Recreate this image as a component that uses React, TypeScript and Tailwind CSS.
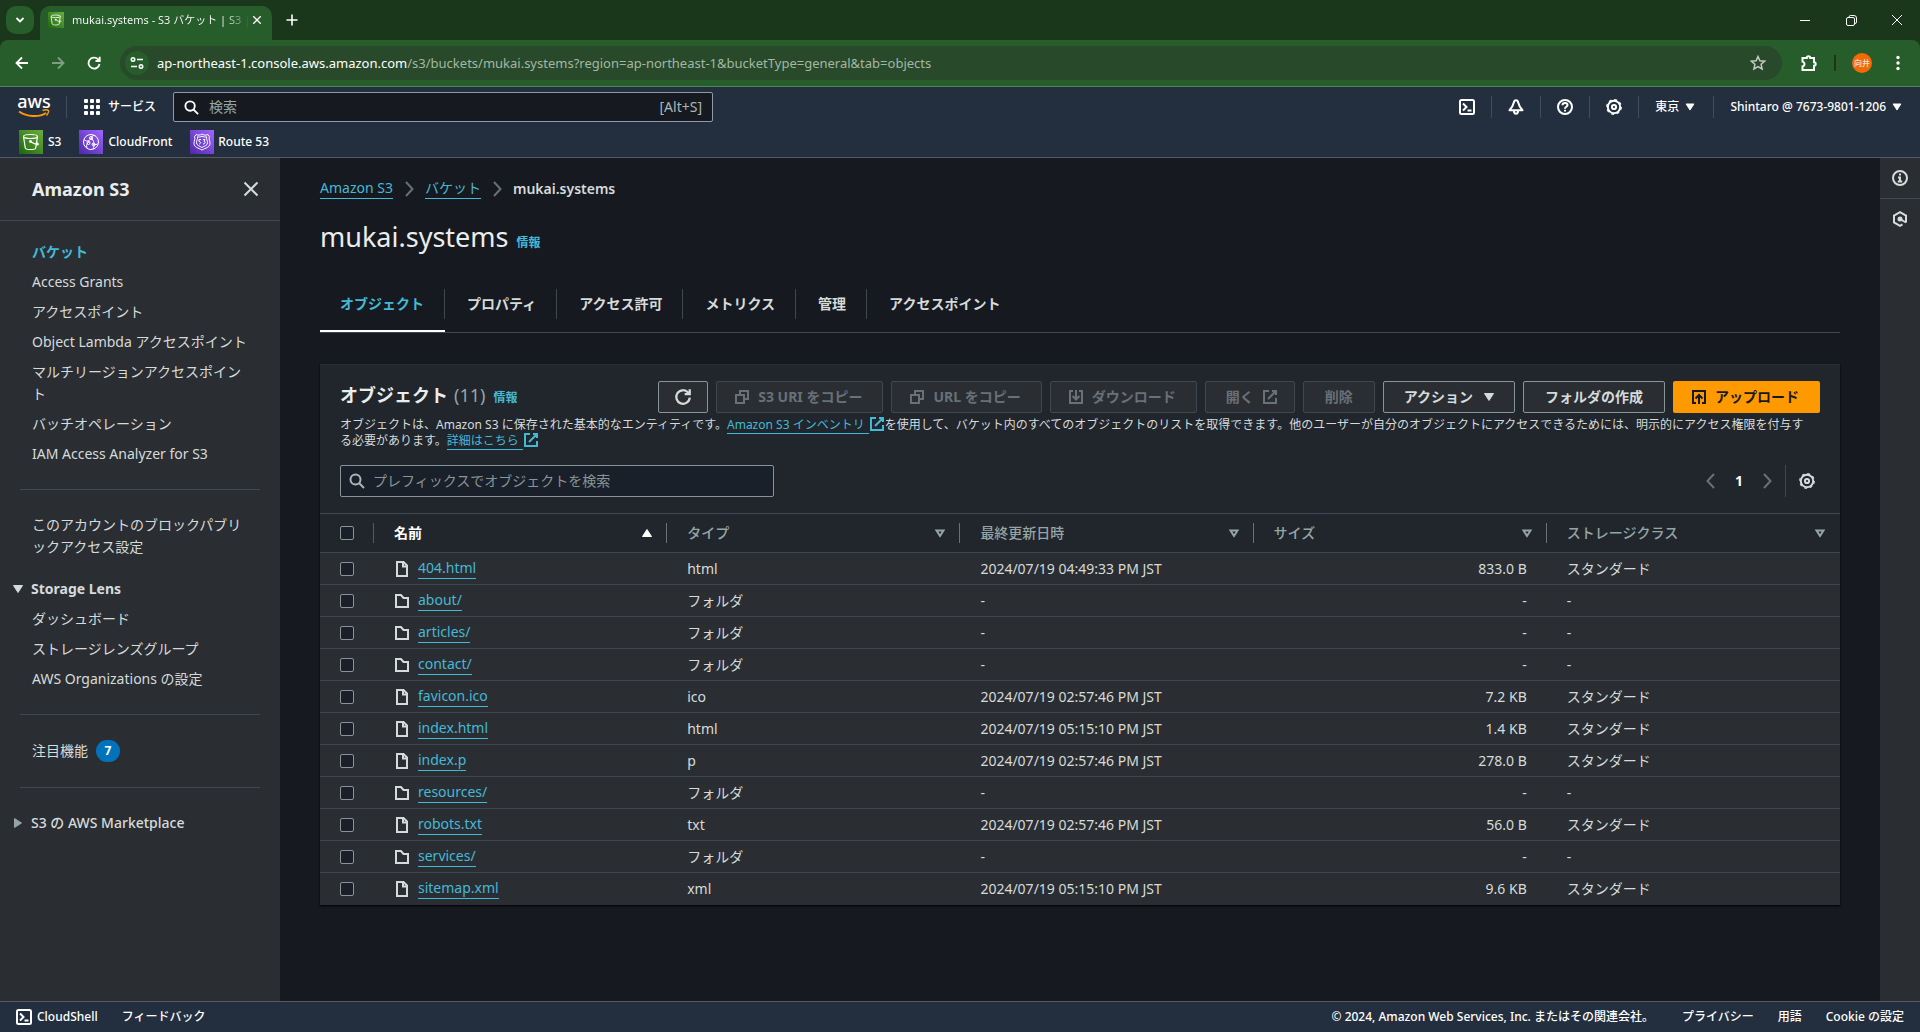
import type { ReactNode } from 'react';

type IconName =
  | 'terminal' | 'bell' | 'help' | 'gear' | 'info' | 'hexagon' | 'search' | 'close' | 'copy' | 'download'
  | 'upload' | 'external' | 'refresh' | 'file' | 'folder' | 'left' | 'right' | 'down' | 'up' | 'sort';

interface S3Object {
  name: string;
  type: string;
  modified: string;
  size: string;
  storage: string;
}

const STANDARD = 'スタンダード';

const objects: S3Object[] = [
  { name: '404.html', type: 'html', modified: '2024/07/19 04:49:33 PM JST', size: '833.0 B', storage: STANDARD },
  { name: 'about/', type: 'フォルダ', modified: '-', size: '-', storage: '-' },
  { name: 'articles/', type: 'フォルダ', modified: '-', size: '-', storage: '-' },
  { name: 'contact/', type: 'フォルダ', modified: '-', size: '-', storage: '-' },
  { name: 'favicon.ico', type: 'ico', modified: '2024/07/19 02:57:46 PM JST', size: '7.2 KB', storage: STANDARD },
  { name: 'index.html', type: 'html', modified: '2024/07/19 05:15:10 PM JST', size: '1.4 KB', storage: STANDARD },
  { name: 'index.p', type: 'p', modified: '2024/07/19 02:57:46 PM JST', size: '278.0 B', storage: STANDARD },
  { name: 'resources/', type: 'フォルダ', modified: '-', size: '-', storage: '-' },
  { name: 'robots.txt', type: 'txt', modified: '2024/07/19 02:57:46 PM JST', size: '56.0 B', storage: STANDARD },
  { name: 'services/', type: 'フォルダ', modified: '-', size: '-', storage: '-' },
  { name: 'sitemap.xml', type: 'xml', modified: '2024/07/19 05:15:10 PM JST', size: '9.6 KB', storage: STANDARD },
];

const tabs = ['オブジェクト', 'プロパティ', 'アクセス許可', 'メトリクス', '管理', 'アクセスポイント'];

const columns = ['タイプ', '最終更新日時', 'サイズ', 'ストレージクラス'];

const icons: Record<IconName, ReactNode> = {
  terminal: (
    <>
      <rect x="1" y="1" width="14" height="14" rx="1.5" />
      <path d="M4 4.5 7.5 8 4 11.5M8.5 11.5h4" />
    </>
  ),
  bell: (
    <>
      <path d="M8 1.2c-1.3 0-1.9.9-2.2 2.3C5.2 6.5 4 8.5 1.5 11.2h13C12 8.5 10.8 6.5 10.2 3.5 9.9 2.1 9.3 1.2 8 1.2z" strokeLinejoin="round" />
      <path d="M6 12c0 1.8.8 2.8 2 2.8s2-1 2-2.8" />
    </>
  ),
  help: (
    <>
      <circle cx="8" cy="8" r="7" />
      <path d="M5.5 6.3C5.5 4.9 6.6 4 8 4s2.5.9 2.5 2.2C10.5 7.8 8 7.7 8 9.7M8 10.8v1.7" />
    </>
  ),
  gear: (
    <>
      <circle cx="8" cy="8" r="6.2" />
      <circle cx="8" cy="8" r="7.3" strokeWidth="1.2" strokeDasharray="2.87 2.87" />
      <circle cx="8" cy="8" r="2.1" />
    </>
  ),
  info: (
    <>
      <circle cx="8" cy="8" r="7" />
      <path d="M8 3.5v2M6 7.5h2V12M5.8 11.5h4.4" />
    </>
  ),
  hexagon: (
    <>
      <path d="M14 11.5V4.6L8 1.2 2 4.6v6.8l6 3.4 2.5-1.4" />
      <circle cx="8" cy="8" r="1.5" fill="currentColor" />
      <path d="m8 8 6 3.5" />
    </>
  ),
  search: (
    <>
      <circle cx="6.5" cy="6.5" r="5" />
      <path d="m10 10 5 5" />
    </>
  ),
  close: <path d="m2 2 12 12M14 2 2 14" />,
  copy: <path d="M2 6h8v8H2zM6 6V2h8v8h-4" />,
  download: <path d="M5 2H2v12h12V2h-3M8 1v9M4.5 7 8 10.5 11.5 7" />,
  upload: <path d="M5 14H2V2h12v12h-3M8 15V6.5M4.5 9.5 8 6l3.5 3.5" />,
  external: <path d="M10 2h4v4M6 10l8-8M14 9v5H2V2h5" />,
  refresh: <path d="M14 8.5A6 6 0 1 1 12.5 4l1 1M14 1v4.5H9.5" />,
  file: <path d="M3 1h6.5L13 4.5V15H3zM9 1v4.5h4" />,
  folder: <path d="M2 2h5l2.5 3H14v9H2z" />,
  left: <path d="M11 1 4.5 8l6.5 7" />,
  right: <path d="M5 1l6.5 7L5 15" />,
  down: <path d="M3.5 4.5h9L8 11.5z" fill="currentColor" strokeWidth="1" />,
  up: <path d="M3.5 11.5h9L8 4.5z" fill="currentColor" strokeWidth="1" />,
  sort: <path d="M4.5 5.5h7L8 11z" />,
};

function Icon({ name, className = 'size-4' }: { name: IconName; className?: string }) {
  return (
    <svg viewBox="0 0 16 16" fill="none" stroke="currentColor" strokeWidth="2" className={`shrink-0 ${className}`} aria-hidden="true">
      {icons[name]}
    </svg>
  );
}

function BucketGlyph({ className }: { className: string }) {
  return (
    <svg viewBox="0 0 24 24" className={`shrink-0 ${className}`} fill="none" stroke="#fff" strokeWidth="1.2" aria-hidden="true">
      <defs>
        <linearGradient id="s3" x1="0" y1="1" x2="1" y2="0">
          <stop offset="0" stopColor="#1b660f" />
          <stop offset="1" stopColor="#6cae3e" />
        </linearGradient>
      </defs>
      <path d="M0 0h24v24H0z" fill="url(#s3)" stroke="none" />
      <ellipse cx="11.5" cy="6.5" rx="7" ry="2" />
      <path d="M4.5 6.5 6.3 18c.3 2 10.1 2 10.4 0l1.8-11.5M11.5 11.5c2.5 1.8 5 3 7.5 3.3.8-.6-.2-1.7-1.5-2.3" />
      <circle cx="11.5" cy="11.5" r=".8" fill="#fff" />
    </svg>
  );
}

function PurpleGlyph({ children }: { children: ReactNode }) {
  return (
    <svg viewBox="0 0 24 24" className="size-6 shrink-0" fill="none" stroke="#fff" strokeWidth="1" aria-hidden="true">
      <defs>
        <linearGradient id="network" x1="0" y1="1" x2="1" y2="0">
          <stop offset="0" stopColor="#4d27a8" />
          <stop offset="1" stopColor="#a166ff" />
        </linearGradient>
      </defs>
      <path d="M0 0h24v24H0z" fill="url(#network)" stroke="none" />
      {children}
    </svg>
  );
}

function BrowserChrome() {
  return (
    <div className="bg-[#1a371b] text-white">
      <div className="flex h-10 items-end justify-between">
        <div className="flex h-[34px]">
          <button aria-label="タブを検索" className="mr-[6px] ml-[6px] flex size-7 items-center justify-center rounded-[10px] bg-[#275d2b]">
            <svg viewBox="0 0 10 10" className="size-[10px]" fill="none" stroke="currentColor" strokeWidth="1.8">
              <path d="m1.5 3 3.5 3.5L8.5 3" />
            </svg>
          </button>
          <div className="flex h-full w-[232px] items-start rounded-t-[10px] bg-[#275d2b] px-2">
            <BucketGlyph className="mt-[6px] size-4" />
            <span className="mt-[6px] ml-2 flex-1 bg-linear-to-r from-white from-85% to-transparent bg-clip-text text-[11px] leading-4 whitespace-nowrap text-transparent">
              mukai.systems - S3 バケット | S3 |
            </span>
            <button aria-label="タブを閉じる" className="mt-[6px] flex size-4 items-center justify-center">
              <Icon name="close" className="size-[10px]" />
            </button>
          </div>
          <button aria-label="新しいタブ" className="ml-[6px] flex size-7 items-center justify-center">
            <svg viewBox="0 0 12 12" className="size-3" stroke="currentColor" strokeWidth="1.6">
              <path d="M6 .5v11M.5 6h11" />
            </svg>
          </button>
        </div>
        <div className="flex h-10 items-center">
          <button aria-label="最小化" className="flex h-10 w-[46px] items-center justify-center">
            <svg viewBox="0 0 10 10" className="size-[10px]" stroke="currentColor"><path d="M0 5.5h10" /></svg>
          </button>
          <button aria-label="元に戻す" className="flex h-10 w-[46px] items-center justify-center">
            <svg viewBox="0 0 11 11" className="size-[11px]" fill="none" stroke="currentColor">
              <rect x=".5" y="2.5" width="8" height="8" rx="1.5" />
              <path d="M3 2.3V2A1.5 1.5 0 0 1 4.5.5H8A2.5 2.5 0 0 1 10.5 3v4A1.5 1.5 0 0 1 9 8.5" />
            </svg>
          </button>
          <button aria-label="閉じる" className="flex h-10 w-[46px] items-center justify-center">
            <svg viewBox="0 0 10 10" className="size-[10px]" stroke="currentColor"><path d="m0 0 10 10M10 0 0 10" /></svg>
          </button>
        </div>
      </div>

      <div className="flex h-[47px] items-center rounded-t-[8px] border-b border-[#4e8552] bg-[#275d2b] px-[14px]">
        <button aria-label="戻る" className="flex w-4 justify-center">
          <svg viewBox="0 0 14 14" className="size-[14px]" fill="none" stroke="currentColor" strokeWidth="1.8"><path d="M13 7H2M7 1.5 1.5 7 7 12.5" /></svg>
        </button>
        <button aria-label="進む" className="ml-5 flex w-4 justify-center text-[#7d9f7f]">
          <svg viewBox="0 0 14 14" className="size-[14px]" fill="none" stroke="currentColor" strokeWidth="1.8"><path d="M1 7h11M7 1.5 12.5 7 7 12.5" /></svg>
        </button>
        <button aria-label="再読み込み" className="ml-5 flex w-4 justify-center">
          <svg viewBox="0 0 14 14" className="size-[14px]" fill="none" stroke="currentColor" strokeWidth="1.8"><path d="M12.5 8A5.5 5.5 0 1 1 11 3.2L12.5 5M12.7.8V5H8.5" /></svg>
        </button>
        <div className="ml-[18px] flex h-[34px] flex-1 items-center rounded-full bg-[#29492b] pr-4 pl-[5px]">
          <button aria-label="サイト情報" className="flex size-6 items-center justify-center rounded-full bg-[#275d2b]">
            <svg viewBox="0 0 14 14" className="size-[14px]" fill="none" stroke="currentColor" strokeWidth="1.6">
              <circle cx="3" cy="3.5" r="1.7" />
              <path d="M7 3.5h6M1 10.5h6" />
              <circle cx="11" cy="10.5" r="1.7" />
            </svg>
          </button>
          <span className="ml-2 flex-1 text-[13px] leading-5 text-[#a3b8a3]">
            <span className="text-white">ap-northeast-1.console.aws.amazon.com</span>
            /s3/buckets/mukai.systems?region=ap-northeast-1&amp;bucketType=general&amp;tab=objects
          </span>
          <button aria-label="ブックマーク" className="text-[#c3ccc3]">
            <svg viewBox="0 0 16 16" className="size-4" fill="none" stroke="currentColor" strokeWidth="1.5">
              <path d="m8 1.5 1.9 4.3 4.7.4-3.5 3.1 1 4.6L8 11.5l-4.1 2.4 1-4.6L1.4 6.2l4.7-.4z" />
            </svg>
          </button>
        </div>
        <button aria-label="拡張機能" className="ml-[18px]">
          <svg viewBox="0 0 18 18" className="size-[18px]" fill="none" stroke="currentColor" strokeWidth="2">
            <path d="M2.5 4h4.3a1.7 1.7 0 0 1 3.4 0H14v4.3a1.7 1.7 0 0 1 0 3.4V16H2.5v-3.6c2.6-.6 2.6-4.2 0-4.8z" />
          </svg>
        </button>
        <span className="mx-4 h-4 w-[2px] bg-[#1a371b]" />
        <button aria-label="プロフィール" className="flex size-5 items-center justify-center rounded-full bg-[#f26b00] text-[8px] leading-3">
          向井
        </button>
        <button aria-label="メニュー" className="ml-[18px] flex w-4 justify-center">
          <svg viewBox="0 0 4 16" className="h-4 w-1" fill="currentColor">
            <circle cx="2" cy="2.5" r="1.7" />
            <circle cx="2" cy="8" r="1.7" />
            <circle cx="2" cy="13.5" r="1.7" />
          </svg>
        </button>
      </div>
    </div>
  );
}

function Divider() {
  return <span className="h-[22px] w-px bg-[#414d5c]" />;
}

function AwsNav() {
  return (
    <header className="flex h-[71px] flex-col justify-between border-b border-[#545b64] bg-[#232f3e] pb-[3px] text-xs font-medium text-white">
      <div className="flex h-10 items-center pr-4 pl-[18px]">
        <a href="#" aria-label="AWS" className="flex w-8 flex-col items-center">
          <span className="h-3 text-[18px] leading-[9px] font-medium">aws</span>
          <svg viewBox="0 0 32 9" className="h-[9px] w-8" fill="none" stroke="#ff9900" strokeWidth="2">
            <path d="M1 2.5c8 5.5 20 6 27 1.5" />
            <path d="M24.5 1.5c2.5-.8 5-.8 5.8 0s-.3 3-1.8 5" strokeWidth="1.5" />
          </svg>
        </a>
        <span className="mr-[17px] ml-4 h-[22px] w-px bg-[#414d5c]" />
        <button className="flex items-center gap-2">
          <svg viewBox="0 0 16 16" className="size-4" fill="currentColor">
            {[0, 6, 12].map((y) => [0, 6, 12].map((x) => <rect key={`${x}-${y}`} x={x} y={y} width="4" height="4" rx="1" />))}
          </svg>
          サービス
        </button>
        <label className="ml-[17px] flex h-[30px] w-[540px] items-center rounded-[2px] border border-[#8d9ba9] bg-[#161a20] px-[10px]">
          <Icon name="search" className="size-[15px]" />
          <input type="search" aria-label="検索" placeholder="検索" className="ml-[10px] w-0 flex-1 bg-transparent text-sm font-normal outline-none placeholder:text-[#95a5a6]" />
          <span className="text-sm font-normal text-[#aab7b8]">[Alt+S]</span>
        </label>
        <div className="ml-auto flex items-center gap-4">
          <button aria-label="CloudShell"><Icon name="terminal" /></button>
          <Divider />
          <button aria-label="通知"><Icon name="bell" /></button>
          <Divider />
          <button aria-label="ヘルプ"><Icon name="help" /></button>
          <Divider />
          <button aria-label="設定"><Icon name="gear" /></button>
          <Divider />
          <button className="flex items-center gap-1">東京 <Icon name="down" className="size-[14px]" /></button>
          <Divider />
          <button className="flex items-center gap-1">Shintaro @ 7673-9801-1206 <Icon name="down" className="size-[14px]" /></button>
        </div>
      </div>
      <nav className="flex h-6 items-center gap-[18px] pl-[19px]">
        <a href="#" className="flex items-center gap-[5px]">
          <BucketGlyph className="size-6" />
          S3
        </a>
        <a href="#" className="flex items-center gap-[5px]">
          <PurpleGlyph>
            <circle cx="12" cy="12" r="7.5" />
            <path d="M5 9.5c2 2.5 6 2 7-1.5.8-2.5 3-3 4.5-2M12 8c3 2 4 7 2 11M8 18c-1-3 0-5 2.5-6.5M18.5 14c-2 1-4 1-5.5-.5" />
            <circle cx="12" cy="8" r="1.5" />
            <circle cx="9.5" cy="13" r="1.5" />
            <circle cx="14.5" cy="14.5" r="1.5" />
          </PurpleGlyph>
          CloudFront
        </a>
        <a href="#" className="flex items-center gap-1">
          <PurpleGlyph>
            <path d="M6 4.5c2 1 4 .8 6-.5 2 1.3 4 1.5 6 .5l1.5 2.3c-1 2 .5 4 .5 6.5 0 4.2-4.5 4.7-8 6.7-3.5-2-8-2.5-8-6.7 0-2.5 1.5-4.5.5-6.5z" />
            <path d="M7.5 6.8c1.5.4 3 .2 4.5-.6 1.5.8 3 1 4.5.6-.3 2 1 3.7 1 6 0 2.700-3 3.2-5.5 4.7-2.5-1.5-5.5-2-5.5-4.7 0-2.3 1.3-4 1-6z" />
            <path d="M11 9.5H9v2c2-.3 2.2 2.5 0 2.5M13 9.5h2l-1 1.8c1.8.2 1.5 2.7-1 2.7" />
          </PurpleGlyph>
          Route 53
        </a>
      </nav>
    </header>
  );
}

function NavLink({ children }: { children: ReactNode }) {
  return <li><a href="#" className="block">{children}</a></li>;
}

function Sidebar() {
  return (
    <aside className="w-[280px] shrink-0 bg-[#2a2e33] text-sm leading-[22px] text-[#d5dbdb]">
      <div className="flex h-[63px] items-center justify-between border-b border-[#414750] pr-[21px] pl-8">
        <h2 className="text-lg leading-[22px] font-bold text-[#eaeded]">Amazon S3</h2>
        <button aria-label="ナビゲーションを閉じる" className="flex size-4 items-center justify-center">
          <svg viewBox="0 0 16 16" className="size-4" fill="none" stroke="currentColor" strokeWidth="2"><path d="m1.5 1.5 13 13M14.5 1.5l-13 13" /></svg>
        </button>
      </div>
      <div className="px-5 pt-5">
        <ul className="flex flex-col gap-2 px-3">
          <li><a href="#" className="block font-bold text-[#44b9d6]">バケット</a></li>
          <NavLink>Access Grants</NavLink>
          <NavLink>アクセスポイント</NavLink>
          <NavLink>Object Lambda アクセスポイント</NavLink>
          <NavLink>マルチリージョンアクセスポイント</NavLink>
          <NavLink>バッチオペレーション</NavLink>
          <NavLink>IAM Access Analyzer for S3</NavLink>
        </ul>
        <hr className="my-6 border-[#414750]" />
        <a href="#" className="block px-3">このアカウントのブロックパブリックアクセス設定</a>
        <details open className="mt-5">
          <summary className="-ml-[10px] flex list-none items-center gap-[5px] font-bold">
            <Icon name="down" className="size-4" />
            Storage Lens
          </summary>
          <ul className="mt-2 flex flex-col gap-2 px-3">
            <NavLink>ダッシュボード</NavLink>
            <NavLink>ストレージレンズグループ</NavLink>
            <NavLink>AWS Organizations の設定</NavLink>
          </ul>
        </details>
        <hr className="my-6 border-[#414750]" />
        <a href="#" className="flex h-6 items-center gap-2 px-3">
          注目機能
          <span className="flex h-[22px] w-6 items-center justify-center rounded-full bg-[#0073bb] text-xs font-bold text-white">7</span>
        </a>
        <hr className="my-6 border-[#414750]" />
        <details>
          <summary className="-ml-[10px] flex list-none items-center gap-[5px] font-medium">
            <Icon name="down" className="size-4 -rotate-90 text-[#95a5a6]" />
            S3 の AWS Marketplace
          </summary>
        </details>
      </div>
    </aside>
  );
}

function ActionButton({ children, disabled, className = 'px-[21px]' }: { children: ReactNode; disabled?: boolean; className?: string }) {
  return (
    <button
      disabled={disabled}
      className={`flex h-8 items-center gap-2 rounded-[2px] border text-sm font-bold whitespace-nowrap ${
        disabled ? 'border-[#414750] bg-[#2a2e33] text-[#687078]' : 'border-[#879596] bg-[#2a2e33] text-[#d5dbdb]'
      } ${className}`}
    >
      {children}
    </button>
  );
}

function TextLink({ children }: { children: ReactNode }) {
  return (
    <a href="#" className="text-[#44b9d6]">
      <span className="border-b border-[#44b9d6] pr-1">{children}</span>
      <Icon name="external" className="-my-1 inline size-4 align-[1px]" />
    </a>
  );
}

function Checkbox({ label }: { label: string }) {
  return <input type="checkbox" aria-label={label} className="block size-[14px] appearance-none rounded-[2px] border border-[#879596] bg-[#1a2029]" />;
}

function ObjectsTable() {
  return (
    <table className="w-full table-fixed border-t border-[#414750] text-left text-sm leading-5">
      <colgroup>
        <col className="w-[54px]" />
        <col />
        <col />
        <col />
        <col />
        <col />
      </colgroup>
      <thead className="text-[#95a5a6]">
        <tr className="h-[39px] border-b border-[#414750]">
          <th className="p-0">
            <div className="flex h-5 items-center border-r border-[#545b64] pl-5">
              <Checkbox label="すべて選択" />
            </div>
          </th>
          <th className="p-0">
            <div className="flex h-5 items-center justify-between border-r border-[#687078] pr-[11px] pl-5 font-bold text-white">
              名前
              <Icon name="up" />
            </div>
          </th>
          {columns.map((column) => (
            <th key={column} className="p-0 font-medium">
              <div className="flex h-5 items-center justify-between border-r border-[#687078] pr-[11px] pl-5 [th:last-child>&]:border-transparent">
                {column}
                <Icon name="sort" />
              </div>
            </th>
          ))}
        </tr>
      </thead>
      <tbody className="bg-[#2a2e33] text-[#d5dbdb]">
        {objects.map((object) => (
          <tr key={object.name} className="h-8 border-b border-[#414750] last:border-0">
            <td className="py-0 pl-5"><Checkbox label={object.name} /></td>
            <td className="py-0 pl-5">
              <div className="flex items-center gap-2">
                <Icon name={object.name.endsWith('/') ? 'folder' : 'file'} />
                <a href="#" className="border-b border-[#44b9d6] text-[#44b9d6]">{object.name}</a>
              </div>
            </td>
            <td className="py-0 pl-5">{object.type}</td>
            <td className="py-0 pl-5">{object.modified}</td>
            <td className="py-0 pr-5 text-right">{object.size}</td>
            <td className="py-0 pl-5">{object.storage}</td>
          </tr>
        ))}
      </tbody>
    </table>
  );
}

function ObjectsPanel() {
  return (
    <section className="mt-[31px] border-t border-[#2a2e33] bg-[#21252c] shadow-[0_1px_2px_#000]">
      <div className="px-5 py-4">
        <div className="flex items-start justify-between">
          <h2 className="flex items-baseline text-lg leading-7 font-bold text-[#eaeded]">
            オブジェクト
            <span className="ml-[6px] font-normal text-[#95a5a6]">(11)</span>
            <a href="#" className="ml-2 text-xs leading-4 text-[#44b9d6]">情報</a>
          </h2>
          <div className="flex gap-2">
            <button aria-label="更新" className="flex h-8 w-[50px] items-center justify-center rounded-[2px] border border-[#879596] bg-[#2a2e33] text-[#d5dbdb]">
              <Icon name="refresh" className="size-[18px]" />
            </button>
            <ActionButton disabled className="pr-5 pl-[17px]"><Icon name="copy" />S3 URI をコピー</ActionButton>
            <ActionButton disabled className="pr-5 pl-[17px]"><Icon name="copy" />URL をコピー</ActionButton>
            <ActionButton disabled className="pr-5 pl-[17px]"><Icon name="download" />ダウンロード</ActionButton>
            <ActionButton disabled className="pr-4 pl-5">開く<Icon name="external" /></ActionButton>
            <ActionButton disabled>削除</ActionButton>
            <ActionButton className="pr-[17px] pl-5">アクション<Icon name="down" /></ActionButton>
            <ActionButton>フォルダの作成</ActionButton>
            <button className="flex h-8 items-center gap-2 rounded-[2px] bg-[#ff9900] pr-[21px] pl-[18px] text-sm font-bold whitespace-nowrap text-[#16191f]">
              <Icon name="upload" />アップロード
            </button>
          </div>
        </div>
        <p className="mt-1 pr-2 text-xs leading-4 text-[#d5dbdb]">
          オブジェクトは、Amazon S3 に保存された基本的なエンティティです。<TextLink>Amazon S3 インベントリ</TextLink>
          を使用して、バケット内のすべてのオブジェクトのリストを取得できます。他のユーザーが自分のオブジェクトにアクセスできるためには、明示的にアクセス権限を付与する必要があります。
          <TextLink>詳細はこちら</TextLink>
        </p>
        <div className="mt-4 flex items-center justify-between">
          <label className="flex h-8 w-[434px] items-center gap-2 rounded-[2px] border border-[#879596] bg-[#1a2029] px-2 text-[#aab7b8]">
            <Icon name="search" />
            <input
              type="search"
              aria-label="プレフィックスでオブジェクトを検索"
              placeholder="プレフィックスでオブジェクトを検索"
              className="w-0 flex-1 bg-transparent text-sm outline-none placeholder:text-[#879596]"
            />
          </label>
          <div className="flex items-center text-[#687078]">
            <button aria-label="前のページ"><Icon name="left" /></button>
            <button className="w-10 text-sm font-bold text-white">1</button>
            <button aria-label="次のページ"><Icon name="right" /></button>
            <span className="mr-[13px] ml-[10px] h-8 w-px bg-[#414750]" />
            <button aria-label="設定" className="mr-[5px] text-[#d5dbdb]"><Icon name="gear" /></button>
          </div>
        </div>
      </div>
      <ObjectsTable />
    </section>
  );
}

function BucketPage() {
  return (
    <main className="min-w-0 flex-1 px-10 pt-5 pb-10">
      <nav className="flex items-center gap-2 text-sm leading-5">
        <a href="#" className="border-b border-[#44b9d6] text-[#44b9d6]">Amazon S3</a>
        <Icon name="right" className="size-4 text-[#687078]" />
        <a href="#" className="border-b border-[#44b9d6] text-[#44b9d6]">バケット</a>
        <Icon name="right" className="size-4 text-[#687078]" />
        <span className="font-semibold text-[#d5dbdb]">mukai.systems</span>
      </nav>
      <h1 className="mt-5 flex items-baseline gap-2 text-[27px] leading-9 text-[#eaeded]">
        mukai.systems
        <a href="#" className="text-xs font-bold text-[#44b9d6]">情報</a>
      </h1>
      <div role="tablist" className="mt-[27px] flex gap-0.5 border-b border-[#414750] text-sm font-bold">
        {tabs.map((tab, index) => (
          <button
            key={tab}
            role="tab"
            aria-selected={index === 0}
            className={`flex h-[50px] border-b-2 pt-[7px] ${index === 0 ? 'border-white text-[#44b9d6]' : 'border-transparent text-[#d5dbdb]'}`}
          >
            <span className={`h-[30px] px-5 leading-[30px] ${index < tabs.length - 1 ? 'border-r border-[#414750]' : ''}`}>{tab}</span>
          </button>
        ))}
      </div>
      <ObjectsPanel />
    </main>
  );
}

export default function App() {
  return (
    <div className="flex min-h-screen flex-col bg-[#16191f] font-['Noto_Sans','Noto_Sans_CJK_JP',sans-serif]">
      <BrowserChrome />
      <AwsNav />
      <div className="flex flex-1">
        <Sidebar />
        <BucketPage />
        <aside className="w-10 shrink-0 bg-[#2a2e33] text-[#d5dbdb]">
          <button aria-label="情報パネル" className="flex h-[41px] w-full items-center justify-center border-b border-[#414750]">
            <Icon name="info" />
          </button>
          <button aria-label="ツールパネル" className="flex h-10 w-full items-center justify-center">
            <Icon name="hexagon" />
          </button>
        </aside>
      </div>
      <footer className="flex h-[31px] items-center border-t border-[#545b64] bg-[#232f3e] px-4 text-xs font-medium text-white">
        <button className="flex items-center gap-[5px]">
          <Icon name="terminal" />
          CloudShell
        </button>
        <a href="#" className="ml-6">フィードバック</a>
        <span className="ml-auto">© 2024, Amazon Web Services, Inc. またはその関連会社。</span>
        <a href="#" className="ml-7">プライバシー</a>
        <a href="#" className="ml-6">用語</a>
        <a href="#" className="ml-6">Cookie の設定</a>
      </footer>
    </div>
  );
}
